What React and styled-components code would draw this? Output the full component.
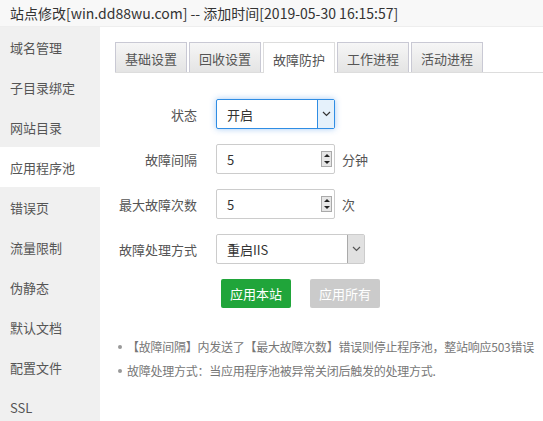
import React from "react";
import styled, { createGlobalStyle } from "styled-components";

const GlobalStyle = createGlobalStyle`
  html, body {
    margin: 0;
    padding: 0;
    background: #fff;
    font-family: "Noto Sans CJK SC", "Liberation Sans", sans-serif;
    overflow: hidden;
  }
`;

const Window = styled.div`
  width: 543px;
  height: 421px;
  display: flex;
  flex-direction: column;
  background: #fff;
`;

const TitleBar = styled.div`
  height: 27px;
  flex: none;
  display: flex;
  align-items: center;
  padding: 0 10px;
  background: #f8f8f8;
  border-bottom: 1px solid #eee;
  font-size: 14px;
  color: #333;
  white-space: nowrap;
  line-height: 1;
  box-sizing: border-box;
`;

const Body = styled.div`
  flex: 1;
  display: flex;
  min-height: 0;
`;

const Sidebar = styled.div`
  width: 100px;
  flex: none;
  background: #f0f0f0;
  display: flex;
  flex-direction: column;
`;

const SideItem = styled.div`
  height: 40px;
  flex: none;
  display: flex;
  align-items: center;
  padding-left: 10px;
  font-size: 13px;
  color: #555;
  background: ${(p) => (p.$active ? "#fff" : "transparent")};
`;

const Content = styled.div`
  flex: 1;
  padding: 15px 0 0 15px;
  min-width: 0;
  overflow: hidden;
`;

const TabBar = styled.div`
  display: flex;
  gap: 2px;
  border-bottom: 1px solid #ddd;
  height: 30px;
`;

const Tab = styled.div`
  box-sizing: border-box;
  padding: 2px 9px 0;
  display: flex;
  align-items: center;
  font-size: 13px;
  color: #555;
  border: 1px solid ${(p) => (p.$active ? "#ddd" : "#c9c9d4")};
  border-bottom: none;
  background: ${(p) =>
    p.$active ? "#fff" : "linear-gradient(#f6f6f6, #e4e4e4)"};
  height: ${(p) => (p.$active ? "31px" : "30px")};
  position: relative;
  z-index: ${(p) => (p.$active ? 1 : 0)};
`;

const Form = styled.div`
  padding-top: 26px;
  display: flex;
  flex-direction: column;
  gap: 15px;
`;

const Row = styled.div`
  display: flex;
  align-items: center;
  height: 30px;
`;

const Label = styled.div`
  width: 82px;
  margin-right: 19px;
  text-align: right;
  font-size: 13px;
  color: #555;
`;

const SelectBox = styled.div`
  width: ${(p) => p.$w}px;
  height: 30px;
  box-sizing: border-box;
  display: flex;
  border: 1px solid ${(p) => (p.$focus ? "#2f8de4" : "#ccc")};
  border-radius: 2px;
  box-shadow: ${(p) =>
    p.$focus ? "0 0 6px rgba(60, 140, 230, 0.45)" : "none"};
  font-size: 13px;
  color: #333;
  background: #fff;
`;

const SelectText = styled.div`
  flex: 1;
  display: flex;
  align-items: center;
  padding-left: 10px;
`;

const Arrow = styled.div`
  width: 16px;
  flex: none;
  display: flex;
  align-items: center;
  justify-content: center;
  border-left: 1px solid ${(p) => (p.$focus ? "#2f8de4" : "#aaa")};
  background: ${(p) => (p.$focus ? "#e5f1fb" : "#e1e1e1")};
`;

const NumBox = styled.div`
  width: 119px;
  height: 30px;
  box-sizing: border-box;
  display: flex;
  align-items: center;
  border: 1px solid #ccc;
  border-radius: 2px;
  padding: 0 2px 0 10px;
  font-size: 13px;
  color: #333;
`;

const NumValue = styled.div`
  flex: 1;
`;

const Spinner = styled.div`
  width: 11px;
  height: 16px;
  box-sizing: border-box;
  border: 1px solid #aaa;
  background: #e6e6e6;
  display: flex;
  flex-direction: column;
  align-items: center;
  justify-content: space-around;
`;

const Tri = styled.div`
  width: 0;
  height: 0;
  border-left: 3px solid transparent;
  border-right: 3px solid transparent;
  ${(p) =>
    p.$up ? "border-bottom: 3px solid #222;" : "border-top: 3px solid #222;"}
`;

const Unit = styled.span`
  margin-left: 7px;
  font-size: 13px;
  color: #555;
`;

const Buttons = styled.div`
  display: flex;
  gap: 19px;
  padding-left: 106px;
  height: 29px;
`;

const Btn = styled.div`
  width: 70px;
  height: 29px;
  border-radius: 2px;
  display: flex;
  align-items: center;
  justify-content: center;
  font-size: 13px;
  color: #fff;
  background: ${(p) => (p.$disabled ? "#cbcbcb" : "#20a53a")};
`;

const Notes = styled.ul`
  margin: 30px 0 0;
  padding: 0 0 0 3px;
  list-style: none;
  display: flex;
  flex-direction: column;
  gap: 6px;
`;

const Note = styled.li`
  position: relative;
  padding-left: 9px;
  font-size: 12px;
  line-height: 18px;
  letter-spacing: -0.25px;
  color: #777;
  white-space: nowrap;
  &::before {
    content: "";
    position: absolute;
    left: 0;
    top: 7px;
    width: 4px;
    height: 4px;
    border-radius: 50%;
    background: #999;
  }
`;

const Chevron = ({ color }) => (
  <svg width="9" height="6" viewBox="0 0 9 6">
    <path d="M1 1 L4.5 4.5 L8 1" fill="none" stroke={color} strokeWidth="1.2" />
  </svg>
);

const sideItems = [
  "域名管理",
  "子目录绑定",
  "网站目录",
  "应用程序池",
  "错误页",
  "流量限制",
  "伪静态",
  "默认文档",
  "配置文件",
  "SSL",
];

const tabs = ["基础设置", "回收设置", "故障防护", "工作进程", "活动进程"];

const NumInput = ({ value }) => (
  <NumBox>
    <NumValue>{value}</NumValue>
    <Spinner>
      <Tri $up />
      <Tri />
    </Spinner>
  </NumBox>
);

export default function App() {
  return (
    <>
      <GlobalStyle />
      <Window>
        <TitleBar>站点修改[win.dd88wu.com] -- 添加时间[2019-05-30 16:15:57]</TitleBar>
        <Body>
          <Sidebar>
            {sideItems.map((s) => (
              <SideItem key={s} $active={s === "应用程序池"}>
                {s}
              </SideItem>
            ))}
          </Sidebar>
          <Content>
            <TabBar>
              {tabs.map((t) => (
                <Tab key={t} $active={t === "故障防护"}>
                  {t}
                </Tab>
              ))}
            </TabBar>
            <Form>
              <Row>
                <Label>状态</Label>
                <SelectBox $w={119} $focus>
                  <SelectText>开启</SelectText>
                  <Arrow $focus>
                    <Chevron color="#333" />
                  </Arrow>
                </SelectBox>
              </Row>
              <Row>
                <Label>故障间隔</Label>
                <NumInput value="5" />
                <Unit>分钟</Unit>
              </Row>
              <Row>
                <Label>最大故障次数</Label>
                <NumInput value="5" />
                <Unit>次</Unit>
              </Row>
              <Row>
                <Label>故障处理方式</Label>
                <SelectBox $w={149}>
                  <SelectText>重启IIS</SelectText>
                  <Arrow>
                    <Chevron color="#555" />
                  </Arrow>
                </SelectBox>
              </Row>
              <Buttons>
                <Btn>应用本站</Btn>
                <Btn $disabled>应用所有</Btn>
              </Buttons>
            </Form>
            <Notes>
              <Note>【故障间隔】内发送了【最大故障次数】错误则停止程序池，整站响应503错误</Note>
              <Note>故障处理方式：当应用程序池被异常关闭后触发的处理方式.</Note>
            </Notes>
          </Content>
        </Body>
      </Window>
    </>
  );
}
